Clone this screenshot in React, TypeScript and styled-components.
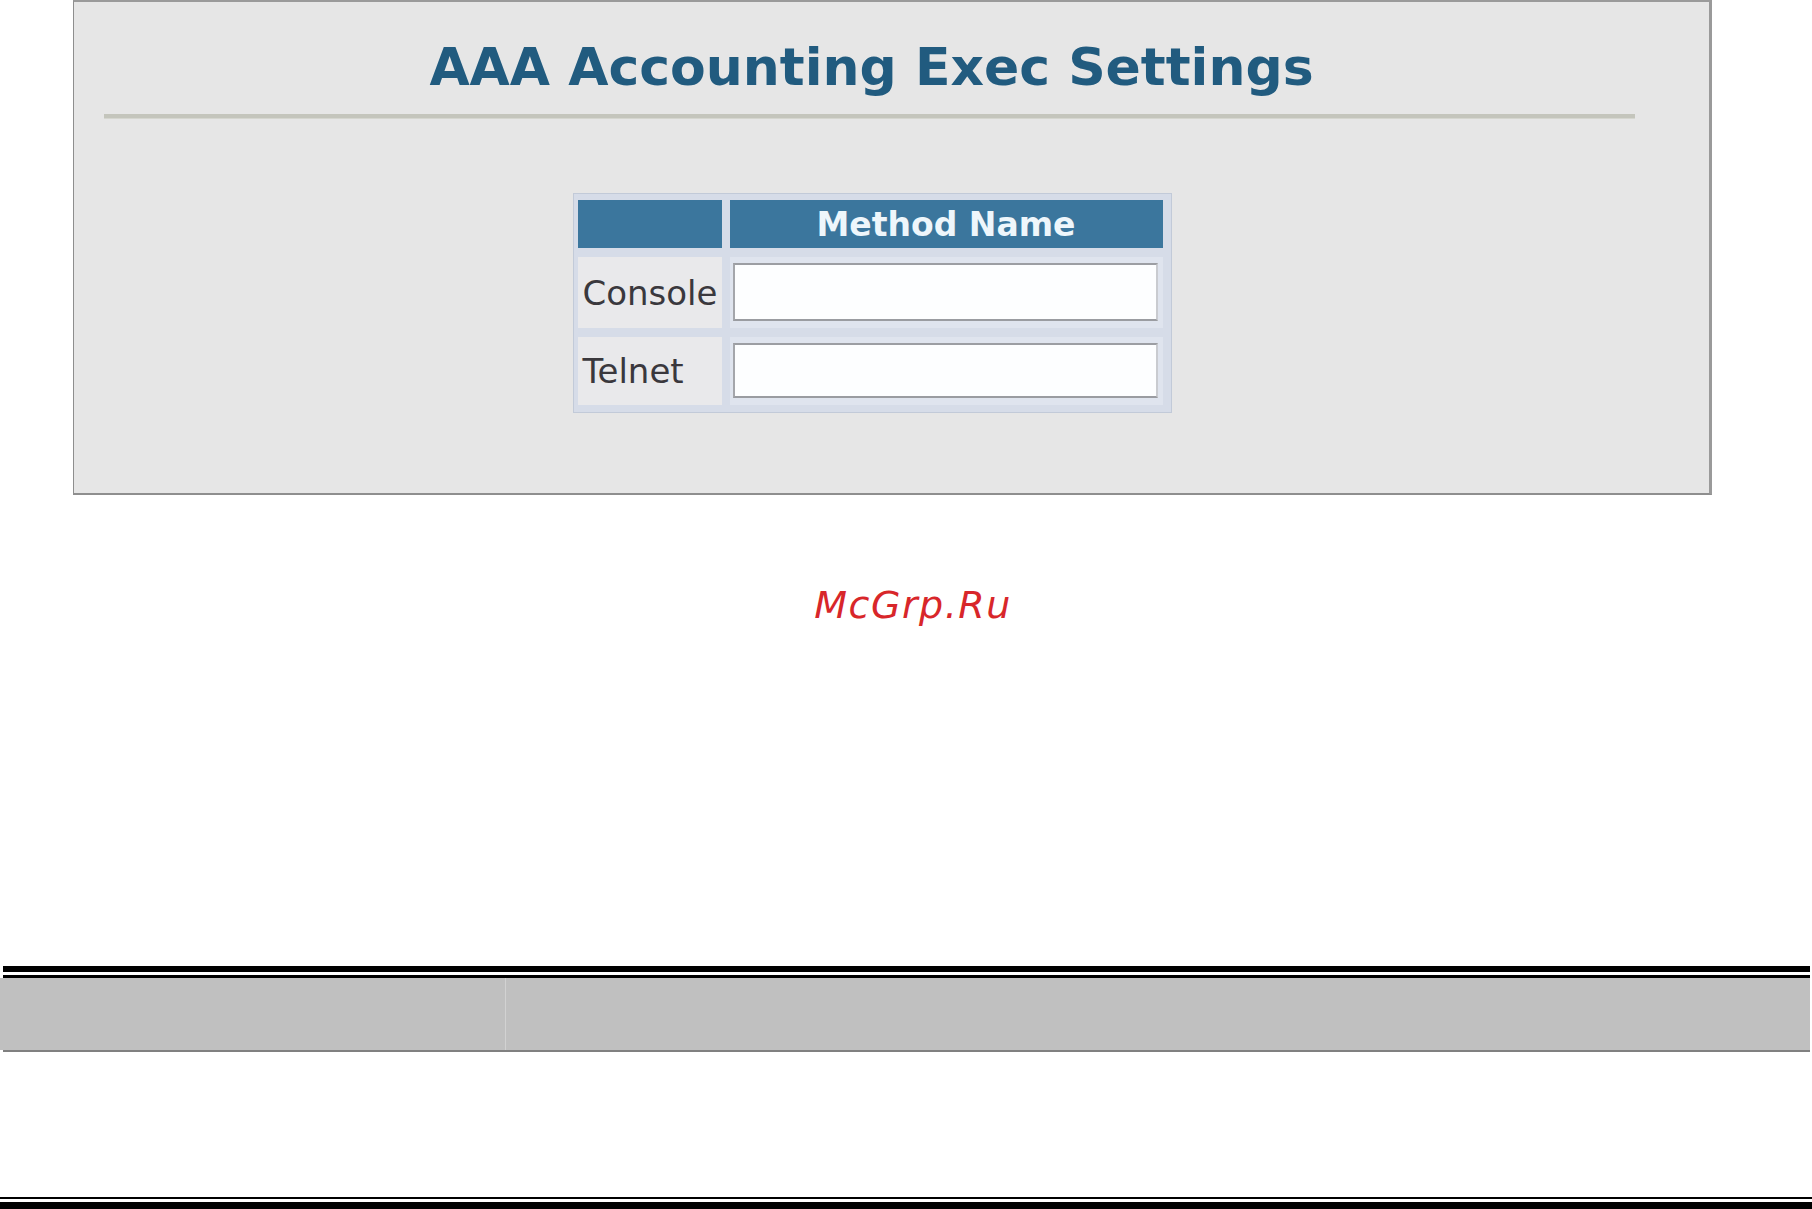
import styled, { createGlobalStyle } from "styled-components";

const GlobalStyle = createGlobalStyle`
  html, body {
    margin: 0;
    padding: 0;
    background: #ffffff;
    overflow: hidden;
  }
  body {
    font-family: "DejaVu Sans", Verdana, sans-serif;
  }
`;

const Page = styled.div`
  display: flex;
  flex-direction: column;
  width: 1812px;
`;

const Panel = styled.div`
  box-sizing: border-box;
  margin-left: 73px;
  width: 1639px;
  background: #e6e6e6;
  border-top: 2px solid #9a9a9a;
  border-left: 1px solid #8e8e8e;
  border-right: 3px solid #9a9a9a;
  border-bottom: 2px solid #8e8e8e;
  padding: 39px 74px 80px 30px;
  display: flex;
  flex-direction: column;
  align-items: center;
`;

const Title = styled.h1`
  margin: 0 0 0 4px;
  font-family: "DejaVu Sans", Verdana, sans-serif;
  font-weight: bold;
  font-size: 52px;
  line-height: 52px;
  color: #215b7f;
  text-align: center;
`;

const Rule = styled.div`
  align-self: stretch;
  margin-top: 21px;
  height: 4px;
  background: #c4c5bc;
  box-shadow: 0 1px 0 #d5d6cf;
`;

const MethodTable = styled.div`
  margin-top: 75px;
  margin-left: 5px;
  display: grid;
  grid-template-columns: 144px 433px;
  grid-template-rows: 48px 71px 68px;
  column-gap: 8px;
  row-gap: 9px;
  padding: 6px 8px 7px 4px;
  background: #d6dce8;
  border: 1px solid #c2cad8;
`;

const HeadCell = styled.div`
  background: #3b769d;
  color: #eef6fb;
  font-family: "DejaVu Sans", Verdana, sans-serif;
  font-weight: bold;
  font-size: 33px;
  display: flex;
  align-items: center;
  justify-content: center;
`;

const LabelCell = styled.div`
  background: #e9e9eb;
  color: #3a383d;
  font-family: "DejaVu Sans", Verdana, sans-serif;
  font-size: 34px;
  display: flex;
  align-items: center;
  padding-left: 5px;
`;

const InputCell = styled.div`
  background: #dfe4ee;
  display: flex;
  padding: 6px 5px 7px 3px;
`;

const TextBox = styled.input`
  flex: 1;
  box-sizing: border-box;
  margin: 0;
  background: #fdfeff;
  border-top: 2px solid #9c9ea3;
  border-left: 2px solid #a4a6ab;
  border-right: 2px solid #c9cbd0;
  border-bottom: 2px solid #9a9ca1;
  outline: none;
  font-family: "DejaVu Sans", Verdana, sans-serif;
  font-size: 24px;
`;

const Watermark = styled.div`
  margin-top: 91px;
  padding-left: 14px;
  text-align: center;
  font-family: "DejaVu Sans", Verdana, sans-serif;
  font-style: italic;
  font-size: 38px;
  line-height: 38px;
  letter-spacing: 1.5px;
  color: #d8262a;
`;

const Line = styled.div<{ $top: number; $thick: number; $inset: number }>`
  margin-top: ${(p) => p.$top}px;
  margin-left: ${(p) => p.$inset}px;
  width: ${(p) => 1810 - p.$inset}px;
  height: ${(p) => p.$thick}px;
  background: #000000;
`;

const Strip = styled.div`
  display: grid;
  grid-template-columns: 505px 1px 1fr;
  width: 1810px;
  height: 72px;
  background: #c0c0c0;
`;

const StripDivider = styled.div`
  background: #d2d2d2;
`;

const StripShadow = styled.div`
  margin-left: 3px;
  width: 1807px;
  height: 2px;
  background: #808080;
`;

const EndLine = styled.div<{ $top: number; $thick: number }>`
  margin-top: ${(p) => p.$top}px;
  width: 1812px;
  height: ${(p) => p.$thick}px;
  background: #000000;
`;

export default function App() {
  return (
    <>
      <GlobalStyle />
      <Page>
        <Panel>
          <Title>AAA Accounting Exec Settings</Title>
          <Rule />
          <MethodTable>
            <HeadCell />
            <HeadCell>Method Name</HeadCell>
            <LabelCell>Console</LabelCell>
            <InputCell>
              <TextBox type="text" />
            </InputCell>
            <LabelCell>Telnet</LabelCell>
            <InputCell>
              <TextBox type="text" />
            </InputCell>
          </MethodTable>
        </Panel>
        <Watermark>McGrp.Ru</Watermark>
        <Line $top={342} $thick={6} $inset={3} />
        <Line $top={3} $thick={3} $inset={3} />
        <Strip>
          <div />
          <StripDivider />
          <div />
        </Strip>
        <StripShadow />
        <EndLine $top={145} $thick={2} />
        <EndLine $top={3} $thick={10} />
      </Page>
    </>
  );
}
